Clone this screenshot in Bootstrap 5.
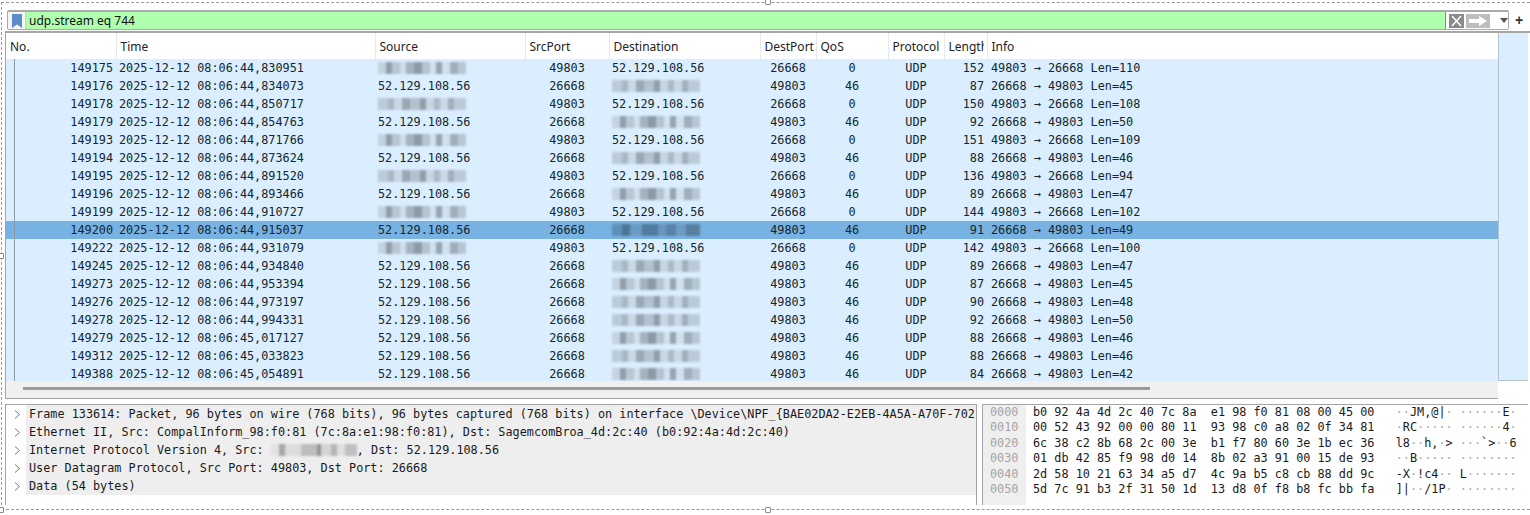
<!DOCTYPE html>
<html lang="en">
<head>
<meta charset="utf-8">
<title>Wireshark packet list</title>
<link href="https://cdn.jsdelivr.net/npm/bootstrap@5.3.0/dist/css/bootstrap.min.css" rel="stylesheet">
<style>
html,body{height:515px;overflow:hidden;background:#fff}
body{font-family:"DejaVu Sans Mono",monospace;font-size:11.82px;color:#12272e}
.frm{position:relative;height:508px;margin:2px 0 0 1px;border:1px dashed #9a9a9a;border-right:0;padding:7px 0 0 3px}
.hnd{position:absolute;width:6px;height:6px;background:#fff;border:1px solid #8a8a8a;border-radius:1px}
.h-t{top:-4px;left:763px}.h-b{bottom:-4px;left:763px}.h-l{left:-4px;top:250px}.h-bl{left:-4px;bottom:-4px}
.fbar{height:21px;margin-left:2px}
.fbox{width:1502px;border:1px solid #a9a9a9;border-top-width:2px;border-radius:2px;height:20px;overflow:hidden}
.fbm{width:18px;background:#f5f5f5;border-right:1px solid #ccc}
.finp{background:#afffaf;font-family:"Noto Sans",sans-serif;font-size:12px;color:#111;padding-left:3px;line-height:17px}
.ftools{width:63px;border-left:1px solid #888;background:#fff;padding-left:3px;gap:2px}
.bx{width:15px;height:14px;background:#8a8a8a}
.ba{width:24px;height:14px;background:#bdbdbd}
.plus{width:20px;font:700 14px/20px "Liberation Sans",sans-serif;text-align:center;color:#333}
.plist{border-top:2px solid #a5a5a5;height:368px}
.pmain{width:1493px;border-left:1px solid #a5a5a5}
.pstrip{width:30px;height:348px;background:#daeeff;border-left:1px solid #b5c3cf;border-bottom:1px solid #b5c3cf}
.pl{table-layout:fixed;width:1492px;margin:0;--bs-table-bg:#daeeff;--bs-table-color:#12272e}
.pl>thead>tr>th{background:#fff;height:26px;padding:2px 0 0 4px;font:400 12px/24px "Noto Sans",sans-serif;color:#222;border-left:1px solid #e8e8e8;overflow:hidden;white-space:nowrap;vertical-align:middle;box-shadow:none}
.pl>thead>tr>th:first-child{border-left:0}
.lenclip{display:block;width:35px;overflow:hidden}
.pl>tbody>tr>td{height:18px;padding:0 3px;line-height:18px;white-space:nowrap;overflow:hidden;border:0;vertical-align:middle;box-shadow:none;font-size:11.82px}
.pl>tbody>tr>td:last-child{padding-left:4px}
.pl>tbody>tr.rsl>td{background:#77b2e2}
.pl .tr-line{position:relative}
.pl .tr-line::before{content:"";position:absolute;left:8px;top:0;bottom:0;width:1px;background:#8a9aa6}
.bodyclip{height:322px;overflow:hidden}
.hbar{height:18px;background:#f0f0f0;border-bottom:1px solid #a5a5a5;padding:6px 0 0 17px}
.hthumb{width:1127px;height:3px;background:#9a9a9a}
.lowr{margin-top:5px;height:101px}
.dpane{width:972px;border:1px solid #a5a5a5;border-bottom:0;overflow:hidden;flex:none}
.drow{height:18px;line-height:18px;white-space:nowrap;padding-left:23px;background:linear-gradient(#eee,#eee) 20px 0/100% 100% no-repeat;position:relative;color:#1a1a1a}
.drow svg{position:absolute;left:8px;top:5px}
.hpane{width:546px;margin-left:5px;border:1px solid #a5a5a5;border-bottom:0;border-right:0;flex:none;overflow:hidden}
.hpre{margin:0;font:inherit;font-size:11.82px;line-height:15.4px;color:#1a1a1a;overflow:hidden}
.hoff{width:43px;background:#efefef;color:#a5a5a5;padding:0 0 0 7px}
.hbyt{padding-left:7px}
.dim{color:#a8a8a8}
.blr{display:inline-block;height:12px;width:88px;vertical-align:-2px;filter:blur(.9px);
background-image:linear-gradient(90deg,#c4d3e0 0 8px,#8f9eaa 8px 14px,#b8c6d2 14px 22px,#cfdeeb 22px 28px,#a3b2bf 28px 36px,#8c9aa6 36px 44px,#b4c3cf 44px 52px,#cfe0ee 52px 58px,#95a4b0 58px 64px,#cfe0ee 64px 72px,#9faebb 72px 80px,#b7c6d3 80px 88px)}
.blb{background-image:linear-gradient(90deg,#bccbd8 0 10px,#a8b7c4 10px 16px,#c8d8e5 16px 24px,#98a8b5 24px 32px,#b3c2ce 32px 42px,#8f9eab 42px 48px,#c6d6e3 48px 56px,#abbac7 56px 62px,#c8d8e5 62px 70px,#a1b0bd 70px 76px,#bccbd8 76px 88px)}
.rsl .blr{background-image:linear-gradient(90deg,#5f8fb8 0 10px,#4c7698 10px 18px,#6a9bc4 18px 30px,#527b9e 30px 46px,#6898c0 46px 54px,#5a82a4 54px 64px,#6b9cc6 64px 74px,#587f9f 74px 88px)}
.blg{width:86px;background-image:linear-gradient(90deg,#e2e2e2 0 8px,#a8a8a8 8px 14px,#dcdcdc 14px 30px,#bdbdbd 30px 46px,#949494 46px 50px,#d5d5d5 50px 60px,#b5b5b5 60px 66px,#e0e0e0 66px 74px,#c0c0c0 74px 86px)}
.tc{text-align:center}.te{text-align:right}
</style>
</head>
<body>
<div class="frm d-flex flex-column">
  <span class="hnd h-t"></span><span class="hnd h-b"></span><span class="hnd h-l"></span><span class="hnd h-bl"></span>
  <div class="fbar d-flex align-items-start">
    <div class="fbox d-flex">
      <div class="fbm d-flex align-items-center justify-content-center">
        <svg width="10" height="14" viewBox="0 0 10 14"><path d="M0 0H10V14L5 10.5 0 14Z" fill="#5b8ec9"/></svg>
      </div>
      <div class="finp flex-grow-1">udp.stream eq 744</div>
      <div class="ftools d-flex align-items-center">
        <svg class="bx" viewBox="0 0 15 14"><path d="M3 2 12 12M12 2 3 12" stroke="#fff" stroke-width="1.5"/></svg>
        <svg class="ba" viewBox="0 0 24 14"><path d="M3 5H13V2L21 7 13 12V9H3Z" fill="#fff"/></svg>
        <svg class="ms-2" width="8" height="5" viewBox="0 0 8 5"><path d="M0 0H8L4 5Z" fill="#555"/></svg>
      </div>
    </div>
    <div class="plus">+</div>
  </div>
  <div class="plist d-flex">
    <div class="pmain">
      <table class="table table-borderless pl">
        <colgroup><col style="width:110px"><col style="width:259px"><col style="width:150px"><col style="width:84px"><col style="width:151px"><col style="width:56px"><col style="width:72px"><col style="width:56px"><col style="width:43px"><col></colgroup>
        <thead><tr><th>No.</th><th>Time</th><th>Source</th><th>SrcPort</th><th>Destination</th><th>DestPort</th><th>QoS</th><th>Protocol</th><th><span class="lenclip">Length</span></th><th>Info</th></tr></thead>
      </table>
      <div class="bodyclip">
      <table class="table table-borderless pl">
        <colgroup><col style="width:110px"><col style="width:259px"><col style="width:150px"><col style="width:84px"><col style="width:151px"><col style="width:56px"><col style="width:72px"><col style="width:56px"><col style="width:43px"><col></colgroup>
        <tbody>
<tr><td class="te tr-line">149175</td><td>2025-12-12 08:06:44,830951</td><td><span class="blr"></span></td><td class="tc">49803</td><td>52.129.108.56</td><td class="tc">26668</td><td class="tc">0</td><td class="tc">UDP</td><td class="te">152</td><td>49803 → 26668 Len=110</td></tr>
<tr><td class="te tr-line">149176</td><td>2025-12-12 08:06:44,834073</td><td>52.129.108.56</td><td class="tc">26668</td><td><span class="blr blb"></span></td><td class="tc">49803</td><td class="tc">46</td><td class="tc">UDP</td><td class="te">87</td><td>26668 → 49803 Len=45</td></tr>
<tr><td class="te tr-line">149178</td><td>2025-12-12 08:06:44,850717</td><td><span class="blr blb"></span></td><td class="tc">49803</td><td>52.129.108.56</td><td class="tc">26668</td><td class="tc">0</td><td class="tc">UDP</td><td class="te">150</td><td>49803 → 26668 Len=108</td></tr>
<tr><td class="te tr-line">149179</td><td>2025-12-12 08:06:44,854763</td><td>52.129.108.56</td><td class="tc">26668</td><td><span class="blr"></span></td><td class="tc">49803</td><td class="tc">46</td><td class="tc">UDP</td><td class="te">92</td><td>26668 → 49803 Len=50</td></tr>
<tr><td class="te tr-line">149193</td><td>2025-12-12 08:06:44,871766</td><td><span class="blr"></span></td><td class="tc">49803</td><td>52.129.108.56</td><td class="tc">26668</td><td class="tc">0</td><td class="tc">UDP</td><td class="te">151</td><td>49803 → 26668 Len=109</td></tr>
<tr><td class="te tr-line">149194</td><td>2025-12-12 08:06:44,873624</td><td>52.129.108.56</td><td class="tc">26668</td><td><span class="blr blb"></span></td><td class="tc">49803</td><td class="tc">46</td><td class="tc">UDP</td><td class="te">88</td><td>26668 → 49803 Len=46</td></tr>
<tr><td class="te tr-line">149195</td><td>2025-12-12 08:06:44,891520</td><td><span class="blr blb"></span></td><td class="tc">49803</td><td>52.129.108.56</td><td class="tc">26668</td><td class="tc">0</td><td class="tc">UDP</td><td class="te">136</td><td>49803 → 26668 Len=94</td></tr>
<tr><td class="te tr-line">149196</td><td>2025-12-12 08:06:44,893466</td><td>52.129.108.56</td><td class="tc">26668</td><td><span class="blr"></span></td><td class="tc">49803</td><td class="tc">46</td><td class="tc">UDP</td><td class="te">89</td><td>26668 → 49803 Len=47</td></tr>
<tr><td class="te tr-line">149199</td><td>2025-12-12 08:06:44,910727</td><td><span class="blr"></span></td><td class="tc">49803</td><td>52.129.108.56</td><td class="tc">26668</td><td class="tc">0</td><td class="tc">UDP</td><td class="te">144</td><td>49803 → 26668 Len=102</td></tr>
<tr class="rsl"><td class="te tr-line">149200</td><td>2025-12-12 08:06:44,915037</td><td>52.129.108.56</td><td class="tc">26668</td><td><span class="blr"></span></td><td class="tc">49803</td><td class="tc">46</td><td class="tc">UDP</td><td class="te">91</td><td>26668 → 49803 Len=49</td></tr>
<tr><td class="te tr-line">149222</td><td>2025-12-12 08:06:44,931079</td><td><span class="blr"></span></td><td class="tc">49803</td><td>52.129.108.56</td><td class="tc">26668</td><td class="tc">0</td><td class="tc">UDP</td><td class="te">142</td><td>49803 → 26668 Len=100</td></tr>
<tr><td class="te tr-line">149245</td><td>2025-12-12 08:06:44,934840</td><td>52.129.108.56</td><td class="tc">26668</td><td><span class="blr blb"></span></td><td class="tc">49803</td><td class="tc">46</td><td class="tc">UDP</td><td class="te">89</td><td>26668 → 49803 Len=47</td></tr>
<tr><td class="te tr-line">149273</td><td>2025-12-12 08:06:44,953394</td><td>52.129.108.56</td><td class="tc">26668</td><td><span class="blr"></span></td><td class="tc">49803</td><td class="tc">46</td><td class="tc">UDP</td><td class="te">87</td><td>26668 → 49803 Len=45</td></tr>
<tr><td class="te tr-line">149276</td><td>2025-12-12 08:06:44,973197</td><td>52.129.108.56</td><td class="tc">26668</td><td><span class="blr blb"></span></td><td class="tc">49803</td><td class="tc">46</td><td class="tc">UDP</td><td class="te">90</td><td>26668 → 49803 Len=48</td></tr>
<tr><td class="te tr-line">149278</td><td>2025-12-12 08:06:44,994331</td><td>52.129.108.56</td><td class="tc">26668</td><td><span class="blr blb"></span></td><td class="tc">49803</td><td class="tc">46</td><td class="tc">UDP</td><td class="te">92</td><td>26668 → 49803 Len=50</td></tr>
<tr><td class="te tr-line">149279</td><td>2025-12-12 08:06:45,017127</td><td>52.129.108.56</td><td class="tc">26668</td><td><span class="blr"></span></td><td class="tc">49803</td><td class="tc">46</td><td class="tc">UDP</td><td class="te">88</td><td>26668 → 49803 Len=46</td></tr>
<tr><td class="te tr-line">149312</td><td>2025-12-12 08:06:45,033823</td><td>52.129.108.56</td><td class="tc">26668</td><td><span class="blr blb"></span></td><td class="tc">49803</td><td class="tc">46</td><td class="tc">UDP</td><td class="te">88</td><td>26668 → 49803 Len=46</td></tr>
<tr><td class="te tr-line">149388</td><td>2025-12-12 08:06:45,054891</td><td>52.129.108.56</td><td class="tc">26668</td><td><span class="blr"></span></td><td class="tc">49803</td><td class="tc">46</td><td class="tc">UDP</td><td class="te">84</td><td>26668 → 49803 Len=42</td></tr>
        </tbody>
      </table>
      </div>
      <div class="hbar"><div class="hthumb"></div></div>
    </div>
    <div class="pstrip"></div>
  </div>
  <div class="lowr d-flex">
    <div class="dpane">
      <div class="drow"><svg width="7" height="9" viewBox="0 0 7 9"><path d="M1 .5 5.5 4.5 1 8.5" fill="none" stroke="#777"/></svg>Frame 133614: Packet, 96 bytes on wire (768 bits), 96 bytes captured (768 bits) on interface \Device\NPF_{BAE02DA2-E2EB-4A5A-A70F-702</div>
      <div class="drow"><svg width="7" height="9" viewBox="0 0 7 9"><path d="M1 .5 5.5 4.5 1 8.5" fill="none" stroke="#777"/></svg>Ethernet II, Src: CompalInform_98:f0:81 (7c:8a:e1:98:f0:81), Dst: SagemcomBroa_4d:2c:40 (b0:92:4a:4d:2c:40)</div>
      <div class="drow"><svg width="7" height="9" viewBox="0 0 7 9"><path d="M1 .5 5.5 4.5 1 8.5" fill="none" stroke="#777"/></svg>Internet Protocol Version 4, Src: <span class="blr blg"></span>, Dst: 52.129.108.56</div>
      <div class="drow"><svg width="7" height="9" viewBox="0 0 7 9"><path d="M1 .5 5.5 4.5 1 8.5" fill="none" stroke="#777"/></svg>User Datagram Protocol, Src Port: 49803, Dst Port: 26668</div>
      <div class="drow"><svg width="7" height="9" viewBox="0 0 7 9"><path d="M1 .5 5.5 4.5 1 8.5" fill="none" stroke="#777"/></svg>Data (54 bytes)</div>
    </div>
    <div class="hpane d-flex">
      <pre class="hpre hoff">0000
0010
0020
0030
0040
0050</pre>
      <pre class="hpre hbyt flex-grow-1">b0 92 4a 4d 2c 40 7c 8a  e1 98 f0 81 08 00 45 00   <span class="dim">··</span>JM,@|<span class="dim">·</span> <span class="dim">······</span>E<span class="dim">·</span>
00 52 43 92 00 00 80 11  93 98 c0 a8 02 0f 34 81   <span class="dim">·</span>RC<span class="dim">·····</span> <span class="dim">······</span>4<span class="dim">·</span>
6c 38 c2 8b 68 2c 00 3e  b1 f7 80 60 3e 1b ec 36   l8<span class="dim">··</span>h,<span class="dim">·</span>&gt; <span class="dim">···</span>`&gt;<span class="dim">··</span>6
01 db 42 85 f9 98 d0 14  8b 02 a3 91 00 15 de 93   <span class="dim">··</span>B<span class="dim">·····</span> <span class="dim">········</span>
2d 58 10 21 63 34 a5 d7  4c 9a b5 c8 cb 88 dd 9c   -X<span class="dim">·</span>!c4<span class="dim">··</span> L<span class="dim">·······</span>
5d 7c 91 b3 2f 31 50 1d  13 d8 0f f8 b8 fc bb fa   ]|<span class="dim">··</span>/1P<span class="dim">·</span> <span class="dim">········</span></pre>
    </div>
  </div>
</div>
<script src="https://cdn.jsdelivr.net/npm/bootstrap@5.3.0/dist/js/bootstrap.bundle.min.js"></script>
</body>
</html>
